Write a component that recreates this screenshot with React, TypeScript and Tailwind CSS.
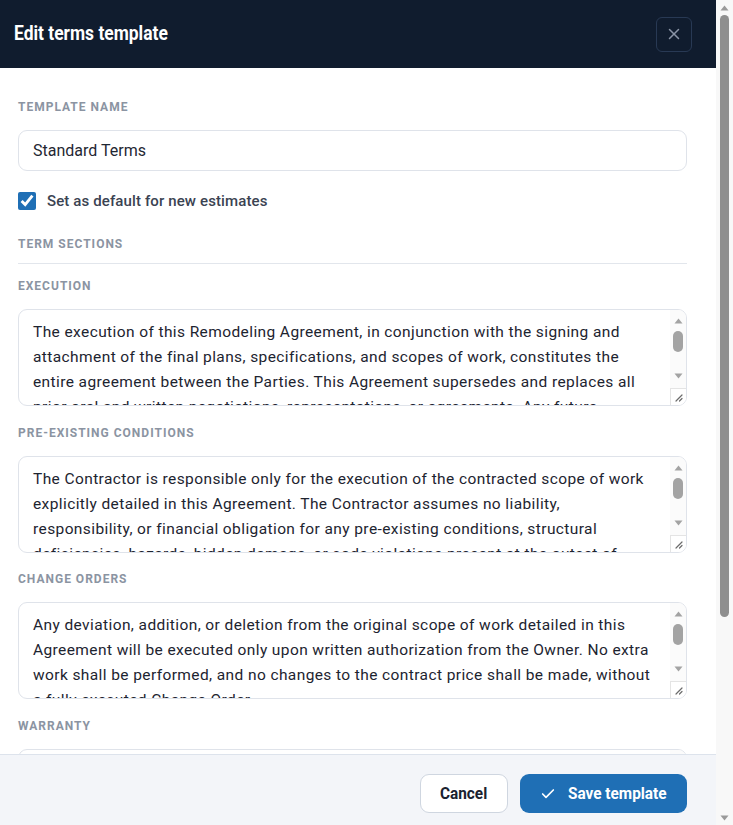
import React from "react";
import { X, Check } from "lucide-react";

const sections: { label: string; lines: string[] }[] = [
  {
    label: "Execution",
    lines: [
      "The execution of this Remodeling Agreement, in conjunction with the signing and",
      "attachment of the final plans, specifications, and scopes of work, constitutes the",
      "entire agreement between the Parties. This Agreement supersedes and replaces all",
      "prior oral and written negotiations, representations, or agreements. Any future",
      "modifications must be made in writing and signed by both Parties.",
    ],
  },
  {
    label: "Pre-existing conditions",
    lines: [
      "The Contractor is responsible only for the execution of the contracted scope of work",
      "explicitly detailed in this Agreement. The Contractor assumes no liability,",
      "responsibility, or financial obligation for any pre-existing conditions, structural",
      "deficiencies, hazards, hidden damage, or code violations present at the outset of",
      "the work.",
    ],
  },
  {
    label: "Change orders",
    lines: [
      "Any deviation, addition, or deletion from the original scope of work detailed in this",
      "Agreement will be executed only upon written authorization from the Owner. No extra",
      "work shall be performed, and no changes to the contract price shall be made, without",
      "a fully executed Change Order.",
    ],
  },
  {
    label: "Warranty",
    lines: [
      "The Contractor warrants all workmanship performed under this Agreement to be free",
      "from defects for a period of one (1) year from the date of substantial completion.",
      "Manufacturer warranties on materials and equipment are passed through to the",
      "Owner.",
    ],
  },
];

const body = { fontFamily: "Roboto, 'Noto Sans', sans-serif" };

function TextareaScrollbar() {
  return (
    <div className="absolute right-[1px] top-[1px] bottom-[1px] w-[16px] flex flex-col bg-[#fbfbfb] rounded-r-[8px]">
      <div className="h-[16px] flex items-end justify-center pb-[2px]">
        <svg width="9" height="6" viewBox="0 0 9 6">
          <path d="M4.5 0.5 L8.5 5.5 L0.5 5.5 Z" fill="#a3a3a3" />
        </svg>
      </div>
      <div className="flex-1 px-[3px] pt-[5px]">
        <div className="h-[21px] rounded-full bg-[#a3a3a3]" />
      </div>
      <div className="h-[16px] flex items-start justify-center pt-[1px]">
        <svg width="9" height="6" viewBox="0 0 9 6">
          <path d="M0.5 0.5 L8.5 0.5 L4.5 5.5 Z" fill="#a3a3a3" />
        </svg>
      </div>
      <div className="h-[17px] border-t border-l border-[#e4e4e4] bg-white rounded-br-[8px] flex items-end justify-end pr-[3px] pb-[3px]">
        <svg width="9" height="9" viewBox="0 0 9 9">
          <path d="M8 2 L2 8 M8 5.5 L5.5 8" stroke="#6b6b6b" strokeWidth="1.2" strokeLinecap="round" />
        </svg>
      </div>
    </div>
  );
}

function PageScrollbar() {
  return (
    <div className="w-[17px] h-full bg-[#f8f8f8] flex flex-col items-center shrink-0">
      <div className="h-[15px] flex items-center justify-center">
        <svg width="9" height="6" viewBox="0 0 9 6">
          <path d="M4.5 0.5 L8.5 5.5 L0.5 5.5 Z" fill="#9a9a9a" />
        </svg>
      </div>
      <div className="flex-1 w-full px-[4px]">
        <div className="h-[602px] rounded-full bg-[#8f8f8f]" />
      </div>
      <div className="h-[15px] flex items-center justify-center">
        <svg width="9" height="6" viewBox="0 0 9 6">
          <path d="M0.5 0.5 L8.5 0.5 L4.5 5.5 Z" fill="#9a9a9a" />
        </svg>
      </div>
    </div>
  );
}

export default function App() {
  return (
    <div className="h-screen flex bg-white overflow-hidden" style={body}>
      <div className="flex-1 min-w-0 flex flex-col">
        <header className="h-[68px] bg-[#101c2e] flex items-center justify-between pl-[14px] pr-[24px] shrink-0">
          <h1 className="text-white text-[21px] font-bold inline-block origin-left scale-x-[0.83] whitespace-nowrap">
            Edit terms template
          </h1>
          <button className="w-[36px] h-[35px] rounded-md border border-[#283954] flex items-center justify-center text-[#8a94a6]">
            <X size={18} strokeWidth={2} />
          </button>
        </header>

        <main className="flex-1 min-h-0 overflow-hidden pl-[18px] pr-[29px] pt-[31px]">
          <label className="block text-[12px] leading-[16px] font-bold uppercase tracking-[1px] text-[#8b94a2]">
            Template name
          </label>
          <input
            defaultValue="Standard Terms"
            className="mt-[15px] w-full h-[41px] rounded-[9px] border border-[#dfe3ea] px-[14px] text-[16px] text-[#1f2733] outline-none"
          />
          <label className="mt-[21px] flex items-center gap-[11px] h-[18px]">
            <input type="checkbox" defaultChecked className="w-[18px] h-[18px] m-0 accent-[#1f6fb5]" />
            <span className="text-[15px] font-medium tracking-[0.12px] text-[#3b4352]">Set as default for new estimates</span>
          </label>
          <div className="mt-[26px] pb-[11px] border-b border-[#e2e6ec] text-[12px] leading-[16px] font-bold uppercase tracking-[1px] text-[#8b94a2]">
            Term sections
          </div>
          <div className="mt-[14px] flex flex-col gap-[18.7px]">
            {sections.map((s) => (
              <div key={s.label}>
                <div className="text-[12px] leading-[16px] font-bold uppercase tracking-[1px] text-[#8b94a2]">
                  {s.label}
                </div>
                <div className="relative mt-[15px] h-[97px]">
                  <textarea
                    defaultValue={s.lines.join("\n")}
                    className="block w-full h-full resize-none overflow-hidden rounded-[9px] border border-[#dfe3ea] pl-[14px] pr-[18px] py-[10px] text-[15.5px] leading-[25px] tracking-[0.4px] text-[#1d2430] outline-none"
                  />
                  <TextareaScrollbar />
                </div>
              </div>
            ))}
          </div>
        </main>

        <footer className="h-[71px] shrink-0 bg-[#f3f5f9] border-t border-[#dde3ec] flex items-start justify-end gap-[12px] pr-[29px] pt-[19px]">
          <button className="h-[39px] w-[88px] rounded-[9px] border border-[#cfd6e0] bg-white flex items-center justify-center">
            <span className="inline-block text-[16px] font-bold text-[#1a2230] scale-x-[0.96]">Cancel</span>
          </button>
          <button className="h-[39px] w-[167px] rounded-[9px] bg-[#1f6fb5] text-white flex items-center justify-start pl-[20px] gap-[12px]">
            <Check size={16} strokeWidth={2.5} />
            <span className="inline-block text-[16px] font-bold scale-x-[0.96] origin-left whitespace-nowrap">Save template</span>
          </button>
        </footer>
      </div>
      <PageScrollbar />
    </div>
  );
}
